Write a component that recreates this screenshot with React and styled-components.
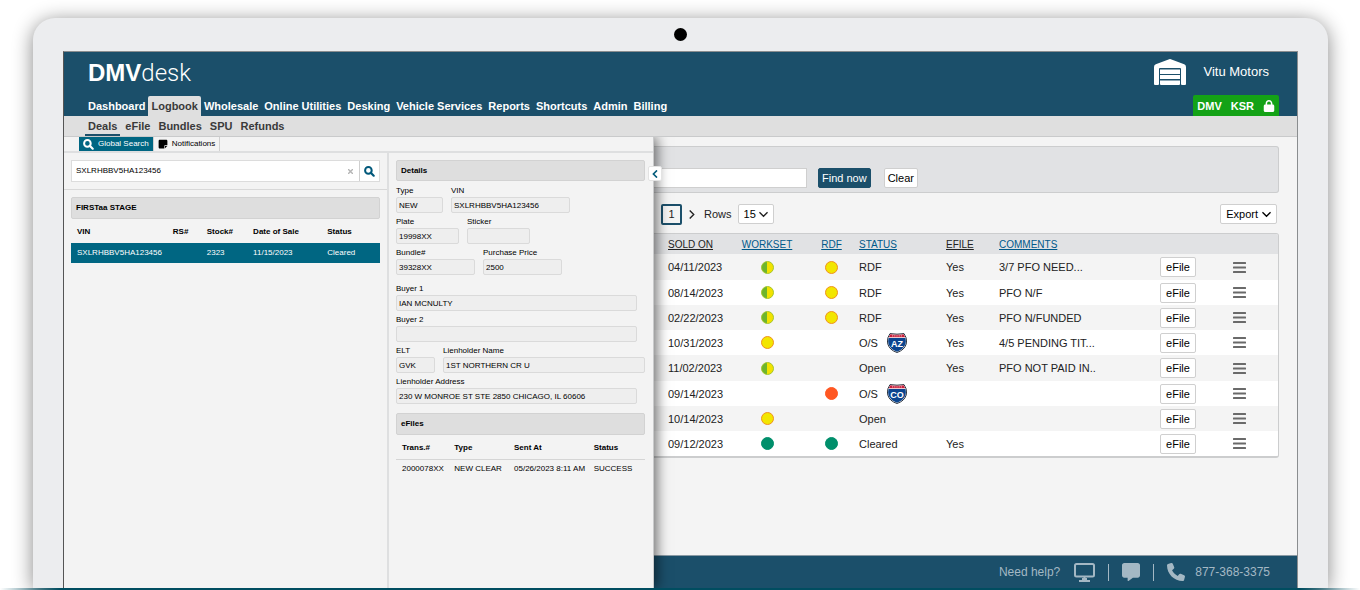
import React from 'react';
import styled, { createGlobalStyle } from 'styled-components';
import { FaNoteSticky, FaLock, FaMessage, FaPhone } from 'react-icons/fa6';

const GlobalStyle = createGlobalStyle`
  *, *::before, *::after { box-sizing: border-box; }
  body {
    margin: 0;
    background: #fff;
    color: #222;
    font: 11px/16px "Liberation Sans", Arial, sans-serif;
  }
  a { color: inherit; text-decoration: none; }
  button, input, select { font: inherit; color: inherit; margin: 0; }
  button { cursor: pointer; }
  svg { display: block; flex: none; }
`;

const Page = styled.div`
  display: flex;
  flex-direction: column;
  min-height: 100vh;
  padding-top: 18px;
  overflow: hidden;
`;

const Laptop = styled.div`
  flex: 1;
  display: flex;
  flex-direction: column;
  margin: 0 32px 0 33px;
  padding: 10px 30px 0;
  border-radius: 22px 22px 0 0;
  background: #ecedef;
  box-shadow: 0 3px 20px rgba(0, 0, 0, 0.48);
`;

const Camera = styled.div`
  align-self: center;
  width: 13px;
  height: 13px;
  margin-bottom: 10px;
  border-radius: 50%;
  background: #000;
`;

const LaptopBase = styled.div`
  height: 2px;
  position: relative;
  background: linear-gradient(90deg, transparent, #004d60 60px, #004d60 calc(100% - 60px), transparent);
`;

const Screen = styled.div`
  flex: 1;
  display: flex;
  flex-direction: column;
  border: 1px solid #8a8d8f;
  border-left-color: #555;
  border-bottom: 0;
  background: #f4f4f4;
`;

const Header = styled.header`
  display: flex;
  justify-content: space-between;
  height: 64px;
  padding: 0 18px 0 20px;
  background: #1b4f6a;
  color: #fff;
`;

const HeaderSide = styled.div`
  display: flex;
  flex-direction: column;
  justify-content: space-between;
  align-items: ${(p) => (p.$end ? 'flex-end' : 'flex-start')};
`;

const Logo = styled.a`
  display: flex;
  align-items: baseline;
  margin: 5px 0 0 4px;
  font-size: 24px;
  line-height: 32px;
  font-weight: 700;
`;

const LogoLight = styled.span`
  font-family: Roboto, "Open Sans", sans-serif;
  font-weight: 300;
`;

const MainNav = styled.nav`
  display: flex;
  padding-left: 1px;
  font-weight: 700;
  line-height: 20px;
`;

const NavLink = styled.a`
  padding: 0 3px;
  border-radius: 2px 2px 0 0;
  background: ${(p) => (p.$active ? '#dfdfdf' : 'transparent')};
  color: ${(p) => (p.$active ? '#3a3a3a' : '#fff')};
`;

const Account = styled.div`
  display: flex;
  align-items: center;
  gap: 17px;
  margin: 7px 10px 0 0;
  font-size: 13px;
`;

const StatusPill = styled.div`
  display: flex;
  align-items: center;
  gap: 9px;
  height: 21px;
  padding: 0 4px;
  border-radius: 2px 2px 0 0;
  background: #14a216;
  font-weight: 700;
`;

const SubNav = styled.nav`
  display: flex;
  gap: 2px;
  height: 20px;
  padding-left: 21px;
  background: #dfdfdf;
  color: #3a3a3a;
  font-weight: 700;
  line-height: 20px;
`;

const SubLink = styled.a`
  padding: 0 3px;
  box-shadow: ${(p) => (p.$active ? 'inset 0 -2px #1b4f6a' : 'none')};
`;

const Body = styled.div`
  flex: 1;
  display: flex;
  border-top: 1px solid #c9cacb;
`;

const Drawer = styled.aside`
  position: relative;
  z-index: 1;
  flex: none;
  display: flex;
  flex-direction: column;
  width: 590px;
  border-right: 1px solid #c9cacb;
  background: #f3f3f3;
  box-shadow: 3px 0 12px rgba(0, 0, 0, 0.55);
  clip-path: inset(0 -24px 0 0);
  color: #000;
  font-size: 8px;
  line-height: 12px;
`;

const DrawerTabs = styled.div`
  display: flex;
  height: 16px;
  padding-left: 15px;
  border-bottom: 2px solid #dedfe0;
`;

const DrawerTab = styled.button`
  display: flex;
  align-items: center;
  gap: 4px;
  padding: 0 4px;
  border: 0;
  border-right: 1px solid #d0d0d0;
  background: ${(p) => (p.$active ? '#006682' : 'transparent')};
  color: ${(p) => (p.$active ? '#fff' : '#000')};
`;

const DrawerColumns = styled.div`
  flex: 1;
  display: flex;
`;

const SearchColumn = styled.section`
  width: 325px;
  border-right: 2px solid #dedfe0;
`;

const SearchForm = styled.form`
  display: flex;
  padding: 7px;
  border-bottom: 1px solid #d8d8d8;
`;

const SearchBox = styled.div`
  flex: 1;
  display: flex;
  align-items: center;
  height: 22px;
  border: 1px solid #dcdcdc;
  background: #fff;
`;

const SearchInput = styled.input`
  flex: 1;
  min-width: 0;
  padding: 0 4px;
  border: 0;
  background: none;
`;

const PlainButton = styled.button`
  display: flex;
  align-items: center;
  justify-content: center;
  width: ${(p) => p.$width};
  height: 20px;
  padding: 0;
  border: 0;
  border-left: ${(p) => (p.$divided ? '1px solid #cfcfcf' : '0')};
  background: none;
  color: ${(p) => p.$color};
`;

const Results = styled.div`
  padding: 7px;
`;

const SectionTitle = styled.h2`
  margin: 0;
  height: ${(p) => (p.$tall ? '22px' : '21px')};
  padding: 0 4px;
  border: 1px solid #d2d2d2;
  border-radius: 2px;
  background: #dedede;
  font-size: 8px;
  line-height: 20px;
`;

const SmallTable = styled.table`
  width: 100%;
  border-collapse: collapse;
  table-layout: fixed;
  th, td {
    height: 20px;
    padding: 0 0 0 6px;
    text-align: left;
    white-space: nowrap;
  }
`;

const ResultHead = styled.thead`
  th { height: 24px; padding-top: 2px; }
`;

const SelectedRow = styled.tr`
  background: #006682;
  color: #fff;
`;

const EfileHead = styled.thead`
  border-bottom: 1px solid #d5d5d5;
  th { height: 24px; padding-top: 2px; }
`;

const DetailColumn = styled.section`
  flex: 1;
  min-width: 0;
  padding: 7px 8px 0 7px;
`;

const FieldRow = styled.div`
  display: flex;
  gap: 8px;
  margin-top: ${(p) => (p.$spaced ? '5px' : '0')};
`;

const DetailForm = styled.div`
  padding: 1px 0 9px;
`;

const FieldLabel = styled.label`
  display: block;
  flex: ${(p) => (p.$width ? 'none' : '1')};
  width: ${(p) => p.$width || 'auto'};
  min-width: 0;
  padding-top: 3px;
`;

const FieldInput = styled.input`
  display: block;
  width: 100%;
  height: 16px;
  padding: 0 2px;
  border: 1px solid #dadada;
  border-radius: 2px;
  background: #eee;
`;

const CollapseButton = styled.button`
  position: absolute;
  top: 29px;
  right: -9px;
  display: flex;
  align-items: center;
  justify-content: center;
  width: 14px;
  height: 15px;
  padding: 0;
  border: 1px solid #e3e3e3;
  border-radius: 2px;
  background: #fff;
  color: #005a7a;
`;

const Main = styled.main`
  flex: 1;
  min-width: 0;
  display: flex;
  flex-direction: column;
`;

const Content = styled.div`
  flex: 1;
  padding: 9px 18px 20px 0;
`;

const FilterPanel = styled.form`
  display: flex;
  align-items: center;
  height: 47px;
  padding-top: 16px;
  border: 1px solid #cccdce;
  border-left: 0;
  border-radius: 0 3px 3px 0;
  background: #e1e2e4;
`;

const FilterInput = styled.input`
  width: 153px;
  height: 20px;
  margin-right: 11px;
  border: 1px solid #cfcfcf;
  border-left: 0;
  background: #fff;
`;

const Button = styled.button`
  display: flex;
  align-items: center;
  justify-content: center;
  gap: 4px;
  height: 20px;
  padding: 0 ${(p) => (p.$tight ? '3px' : '5px')};
  border: 1px solid ${(p) => (p.$primary ? '#1b4f6a' : '#cfcfcf')};
  border-radius: 2px;
  background: ${(p) => (p.$primary ? '#1b4f6a' : '#fff')};
  color: ${(p) => (p.$primary ? '#fff' : '#000')};
  margin-right: ${(p) => p.$gap || '0'};
`;

const Pager = styled.div`
  display: flex;
  align-items: center;
  height: 40px;
  padding: 2px 2px 0 7px;
`;

const PageButton = styled.button`
  width: 21px;
  height: 21px;
  padding: 0;
  border: 2px solid #1b4f6a;
  border-radius: 2px;
  background: #f4f4f4;
`;

const RowsLabel = styled.label`
  display: flex;
  align-items: center;
  gap: 6px;
  margin: 0 auto 0 4px;
`;

const SelectWrap = styled.span`
  display: grid;
  align-items: center;
  > * { grid-area: 1 / 1; }
  > svg { justify-self: end; margin-right: 6px; pointer-events: none; }
`;

const Select = styled.select`
  appearance: none;
  width: 36px;
  height: 20px;
  padding: 0 0 0 5px;
  border: 1px solid #cfcfcf;
  border-radius: 2px;
  background: #fff;
  color: #000;
`;

const TableFrame = styled.div`
  border: 1px solid #cccdce;
  border-left: 0;
  border-bottom-width: 2px;
  border-radius: 0 3px 3px 0;
  overflow: hidden;
`;

const DealTable = styled.table`
  width: 100%;
  border-collapse: collapse;
  table-layout: fixed;
  th, td { padding: 0; text-align: left; white-space: nowrap; }
  th { height: 20px; padding-top: 1px; background: #e1e2e4; font-size: 10px; font-weight: 400; }
  th:first-child, td:first-child { padding-left: 14px; }
  th:last-child, td:last-child { padding-right: 10px; }
`;

const DealRow = styled.tr`
  height: 25px;
  background: #fff;
  &:nth-child(4n + 1) { height: 26px; }
  &:nth-child(odd) { background: #f4f4f4; }
`;

const SortLink = styled.a`
  text-decoration: underline;
  color: ${(p) => (p.$linked ? '#00598a' : '#222')};
`;

const Center = styled.div`
  display: flex;
  justify-content: center;
`;

const StatusCell = styled.div`
  display: flex;
  align-items: center;
  gap: 9px;
`;

const fills = {
  split: 'linear-gradient(90deg, #6db52c 50%, #f2e200 50%)',
  yellow: '#f2e600',
  red: '#ff5722',
  green: '#008f6b',
};
const rings = { split: '#a5c62c', yellow: '#f0921e', red: '#ff5722', green: '#008f6b' };

const Dot = styled.span`
  width: 13px;
  height: 13px;
  border: 1px solid ${(p) => rings[p.$kind]};
  border-radius: 50%;
  background: ${(p) => fills[p.$kind]};
  background-origin: border-box;
`;

const MenuButton = styled.button`
  padding: 0;
  border: 0;
  background: none;
  color: #6a6a6a;
`;

const Footer = styled.footer`
  display: flex;
  align-items: center;
  justify-content: flex-end;
  height: 33px;
  padding: 0 27px 0 0;
  border-top: 1px solid #8a9aa4;
  background: #1b4f6a;
  color: #a4b8c4;
  font-size: 12px;
`;

const FooterLink = styled.a`
  display: flex;
  align-items: center;
  gap: ${(p) => p.$gap || '0'};
`;

const FooterRule = styled.span`
  width: 1px;
  height: 17px;
  margin: 0 13px;
  background: #a4b8c4;
`;

const Chevron = ({ d, size = 9, width = 2 }) => (
  <svg width={size} height={size} viewBox="0 0 10 10" fill="none" stroke="currentColor" strokeWidth={width} aria-hidden="true">
    <path d={d} />
  </svg>
);
const DOWN = 'M.5 2.500L5 7l4.500-4.500';
const RIGHT = 'M3 .5L7.500 5 3 9.500';
const LEFT = 'M7.500.5L3 5l4.500 4.500';

const SearchIcon = () => (
  <svg width="11" height="11" viewBox="0 0 11 11" fill="none" stroke="currentColor" strokeWidth="2" aria-hidden="true">
    <circle cx="4.400" cy="4.400" r="3.300" />
    <path d="M6.800 6.800L9.700 9.700" strokeWidth="2.200" strokeLinecap="round" />
  </svg>
);

const GarageIcon = () => (
  <svg width="32" height="26" viewBox="0 0 32 26" fill="#fff" aria-hidden="true">
    <path d="M0 25V8Q0 6 1.800 5.200L14.500.400Q16-.200 17.500.400L30.200 5.200Q32 6 32 8V25Q32 26 31 26H28Q27 26 27 25V10Q27 9 26 9H6Q5 9 5 10V25Q5 26 4 26H1Q0 26 0 25Z" />
    <path d="M6 10.500h20v4.500H6zM6 16h20v4H6zM6 21.500h20V25q0 1-1 1H7q-1 0-1-1z" />
  </svg>
);

const MonitorIcon = () => (
  <svg width="21" height="19" viewBox="0 0 21 19" fill="none" stroke="currentColor" strokeWidth="2" aria-hidden="true">
    <rect x="1" y="1" width="19" height="12.500" rx="1.500" />
    <path d="M5 18h11" />
    <path d="M8 16h5M10.500 13.500v4" />
  </svg>
);

const HamburgerIcon = () => (
  <svg width="13" height="11" viewBox="0 0 13 11" fill="currentColor" aria-hidden="true">
    <rect width="13" height="2" rx=".5" />
    <rect y="4.500" width="13" height="2" rx=".5" />
    <rect y="9" width="13" height="2" rx=".5" />
  </svg>
);

const ShieldBadge = ({ state }) => (
  <svg width="20" height="20" viewBox="0 0 20 20" role="img" aria-label={state}>
    <path d="M3 .6Q10 1.800 17 .6 18 2.500 19 4.500 20 8 19.200 11 17.500 17 10 19.500 2.500 17 .8 11 0 8 1 4.500 2 2.500 3 .6Z" fill="#fff" stroke="#2c3440" />
    <path d="M3.400 1.200Q10 2.200 16.600 1.200L18.200 4.300H1.800Z" fill="#c8203c" />
    <path d="M5 2.900h10" stroke="#f0b8c0" strokeDasharray="1 .8" />
    <path d="M1.600 5.100H18.400Q19.300 8 18.500 11 16.800 16.200 10 18.700 3.200 16.200 1.500 11 .7 8 1.600 5.100Z" fill="#0b458f" />
    <text x="10" y="13.500" textAnchor="middle" fill="#fff" fontFamily="Liberation Sans, Arial, sans-serif" fontWeight="700" fontSize="9">
      {state}
    </text>
  </svg>
);

const navItems = ['Dashboard', 'Logbook', 'Wholesale', 'Online Utilities', 'Desking', 'Vehicle Services', 'Reports', 'Shortcuts', 'Admin', 'Billing'];
const subItems = ['Deals', 'eFile', 'Bundles', 'SPU', 'Refunds'];

const deals = [
  { sold: '04/11/2023', workset: 'split', rdf: 'yellow', status: 'RDF', efile: 'Yes', comment: '3/7 PFO NEED...' },
  { sold: '08/14/2023', workset: 'split', rdf: 'yellow', status: 'RDF', efile: 'Yes', comment: 'PFO N/F' },
  { sold: '02/22/2023', workset: 'split', rdf: 'yellow', status: 'RDF', efile: 'Yes', comment: 'PFO N/FUNDED' },
  { sold: '10/31/2023', workset: 'yellow', status: 'O/S', state: 'AZ', efile: 'Yes', comment: '4/5 PENDING TIT...' },
  { sold: '11/02/2023', workset: 'split', status: 'Open', efile: 'Yes', comment: 'PFO NOT PAID IN..' },
  { sold: '09/14/2023', rdf: 'red', status: 'O/S', state: 'CO' },
  { sold: '10/14/2023', workset: 'yellow', status: 'Open' },
  { sold: '09/12/2023', workset: 'green', rdf: 'green', status: 'Cleared', efile: 'Yes' },
];

const Field = ({ label, value = '', width }) => (
  <FieldLabel $width={width}>
    {label}
    <FieldInput readOnly value={value} />
  </FieldLabel>
);

const GlobalSearch = () => (
  <SearchColumn>
    <SearchForm onSubmit={(e) => e.preventDefault()}>
      <SearchBox>
        <SearchInput aria-label="Global search" defaultValue="SXLRHBBV5HA123456" />
        <PlainButton type="button" $width="18px" $color="#b5b5b5" aria-label="Clear search">
          <svg width="5" height="5" viewBox="0 0 5 5" stroke="currentColor" strokeWidth="1.400" aria-hidden="true">
            <path d="M0 0l5 5M5 0L0 5" />
          </svg>
        </PlainButton>
        <PlainButton type="submit" $width="20px" $divided $color="#00587a" aria-label="Search">
          <SearchIcon />
        </PlainButton>
      </SearchBox>
    </SearchForm>
    <Results>
      <SectionTitle $tall>FIRSTaa STAGE</SectionTitle>
      <SmallTable>
        <colgroup>
          <col style={{ width: '31%' }} />
          <col style={{ width: '11%' }} />
          <col style={{ width: '15%' }} />
          <col style={{ width: '24%' }} />
          <col />
        </colgroup>
        <ResultHead>
          <tr>
            <th>VIN</th>
            <th>RS#</th>
            <th>Stock#</th>
            <th>Date of Sale</th>
            <th>Status</th>
          </tr>
        </ResultHead>
        <tbody>
          <SelectedRow>
            <td>SXLRHBBV5HA123456</td>
            <td />
            <td>2323</td>
            <td>11/15/2023</td>
            <td>Cleared</td>
          </SelectedRow>
        </tbody>
      </SmallTable>
    </Results>
  </SearchColumn>
);

const DealDetails = () => (
  <DetailColumn>
    <SectionTitle>Details</SectionTitle>
    <DetailForm>
      <FieldRow>
        <Field label="Type" value="NEW" width="47px" />
        <Field label="VIN" value="SXLRHBBV5HA123456" width="119px" />
      </FieldRow>
      <FieldRow>
        <Field label="Plate" value="19998XX" width="63px" />
        <Field label="Sticker" width="63px" />
      </FieldRow>
      <FieldRow>
        <Field label="Bundle#" value="39328XX" width="79px" />
        <Field label="Purchase Price" value="2500" width="79px" />
      </FieldRow>
      <FieldRow $spaced>
        <Field label="Buyer 1" value="IAN MCNULTY" width="241px" />
      </FieldRow>
      <FieldRow>
        <Field label="Buyer 2" width="241px" />
      </FieldRow>
      <FieldRow>
        <Field label="ELT" value="GVK" width="39px" />
        <Field label="Lienholder Name" value="1ST NORTHERN CR U" />
      </FieldRow>
      <FieldRow>
        <Field label="Lienholder Address" value="230 W MONROE ST STE 2850 CHICAGO, IL 60606" width="241px" />
      </FieldRow>
    </DetailForm>
    <SectionTitle $tall>eFiles</SectionTitle>
    <SmallTable>
      <colgroup>
        <col style={{ width: '21%' }} />
        <col style={{ width: '24%' }} />
        <col style={{ width: '32%' }} />
        <col />
      </colgroup>
      <EfileHead>
        <tr>
          <th>Trans.#</th>
          <th>Type</th>
          <th>Sent At</th>
          <th>Status</th>
        </tr>
      </EfileHead>
      <tbody>
        <tr>
          <td>2000078XX</td>
          <td>NEW CLEAR</td>
          <td>05/26/2023 8:11 AM</td>
          <td>SUCCESS</td>
        </tr>
      </tbody>
    </SmallTable>
  </DetailColumn>
);

const Deals = () => (
  <TableFrame>
    <DealTable>
      <colgroup>
        <col style={{ width: 76 }} />
        <col style={{ width: 74 }} />
        <col style={{ width: 55 }} />
        <col style={{ width: 87 }} />
        <col style={{ width: 53 }} />
        <col />
        <col style={{ width: 64 }} />
        <col style={{ width: 68 }} />
      </colgroup>
      <thead>
        <tr>
          <th><SortLink href="#">SOLD ON</SortLink></th>
          <th><Center><SortLink href="#" $linked>WORKSET</SortLink></Center></th>
          <th><Center><SortLink href="#" $linked>RDF</SortLink></Center></th>
          <th><SortLink href="#" $linked>STATUS</SortLink></th>
          <th><SortLink href="#">EFILE</SortLink></th>
          <th><SortLink href="#" $linked>COMMENTS</SortLink></th>
          <th aria-label="eFile action" />
          <th aria-label="Menu" />
        </tr>
      </thead>
      <tbody>
        {deals.map((deal) => (
          <DealRow key={deal.sold}>
            <td>{deal.sold}</td>
            <td>{deal.workset && <Center><Dot $kind={deal.workset} /></Center>}</td>
            <td>{deal.rdf && <Center><Dot $kind={deal.rdf} /></Center>}</td>
            <td>
              <StatusCell>
                {deal.status}
                {deal.state && <ShieldBadge state={deal.state} />}
              </StatusCell>
            </td>
            <td>{deal.efile}</td>
            <td>{deal.comment}</td>
            <td><Center><Button type="button">eFile</Button></Center></td>
            <td><Center><MenuButton type="button" aria-label="Row menu"><HamburgerIcon /></MenuButton></Center></td>
          </DealRow>
        ))}
      </tbody>
    </DealTable>
  </TableFrame>
);

export default function App() {
  return (
    <Page>
      <GlobalStyle />
      <Laptop>
        <Camera />
        <Screen>
          <Header>
            <HeaderSide>
              <Logo href="#">DMV<LogoLight>desk</LogoLight></Logo>
              <MainNav aria-label="Main">
                {navItems.map((item) => (
                  <NavLink key={item} href="#" $active={item === 'Logbook'}>{item}</NavLink>
                ))}
              </MainNav>
            </HeaderSide>
            <HeaderSide $end>
              <Account>
                <GarageIcon />
                Vitu Motors
              </Account>
              <StatusPill>
                <span>DMV</span>
                <span>KSR</span>
                <FaLock size={12} />
              </StatusPill>
            </HeaderSide>
          </Header>
          <SubNav aria-label="Logbook">
            {subItems.map((item) => (
              <SubLink key={item} href="#" $active={item === 'Deals'}>{item}</SubLink>
            ))}
          </SubNav>
          <Body>
            <Drawer>
              <DrawerTabs>
                <DrawerTab type="button" $active><SearchIcon />Global Search</DrawerTab>
                <DrawerTab type="button"><FaNoteSticky size={10} />Notifications</DrawerTab>
              </DrawerTabs>
              <DrawerColumns>
                <GlobalSearch />
                <DealDetails />
              </DrawerColumns>
              <CollapseButton type="button" aria-label="Collapse panel">
                <Chevron d={LEFT} size={8} />
              </CollapseButton>
            </Drawer>
            <Main>
              <Content>
                <FilterPanel onSubmit={(e) => e.preventDefault()}>
                  <FilterInput aria-label="Find deals" />
                  <Button type="submit" $primary $tight $gap="13px">Find now</Button>
                  <Button type="reset" $tight>Clear</Button>
                </FilterPanel>
                <Pager>
                  <PageButton type="button">1</PageButton>
                  <PlainButton type="button" $width="18px" $color="#222" aria-label="Next page">
                    <Chevron d={RIGHT} width={1.5} />
                  </PlainButton>
                  <RowsLabel>
                    Rows
                    <SelectWrap>
                      <Select defaultValue="15"><option>15</option><option>30</option></Select>
                      <Chevron d={DOWN} width={1.5} />
                    </SelectWrap>
                  </RowsLabel>
                  <Button type="button">Export<Chevron d={DOWN} width={1.5} /></Button>
                </Pager>
                <Deals />
              </Content>
              <Footer>
                <FooterLink href="#" $gap="14px">Need help?<MonitorIcon /></FooterLink>
                <FooterRule />
                <FooterLink href="#" aria-label="Chat"><FaMessage size={18} /></FooterLink>
                <FooterRule />
                <FooterLink href="#" $gap="10px"><FaPhone size={18} />877-368-3375</FooterLink>
              </Footer>
            </Main>
          </Body>
        </Screen>
      </Laptop>
      <LaptopBase />
    </Page>
  );
}
